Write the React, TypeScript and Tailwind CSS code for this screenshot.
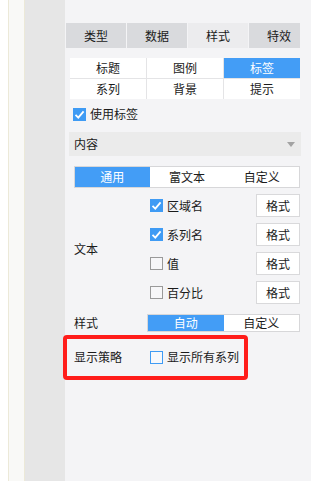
import type { ReactNode } from "react";

const FONT = { fontFamily: '"Noto Sans CJK SC", "Noto Sans", sans-serif' };

function CheckBox({ checked, accent }: { checked?: boolean; accent?: boolean }) {
  if (checked) {
    return (
      <span className="grid h-[13px] w-[13px] shrink-0 place-items-center bg-[#3f9bf4]">
        <svg viewBox="0 0 13 13" className="h-[13px] w-[13px]">
          <path d="M2.5 6.8 L5.3 9.6 L10.6 3.4" fill="none" stroke="#fff" strokeWidth="1.8" />
        </svg>
      </span>
    );
  }
  return (
    <span
      className={
        "h-[13px] w-[13px] shrink-0 border " +
        (accent ? "border-[#3f9bf4] bg-[#f7f8fb]" : "border-[#9a9a9a] bg-[#f7f7f9]")
      }
    />
  );
}

function Seg({ items, active, cls }: { items: string[]; active: number; cls: string }) {
  return (
    <div className={"flex border border-[#d7d7d9] bg-white " + cls}>
      {items.map((t, i) => (
        <div
          key={t}
          className={
            "flex flex-1 items-center justify-center text-[12px] " +
            (i === active ? "bg-[#439df6] text-white" : "text-[#1b1b1b]")
          }
        >
          {t}
        </div>
      ))}
    </div>
  );
}

function OptRow({ label, checked }: { label: string; checked?: boolean }) {
  return (
    <div className="flex h-[23px] w-[150px] items-center">
      <CheckBox checked={checked} />
      <span className="ml-[4px] flex-1 text-[12px] text-[#1b1b1b]">{label}</span>
      <button className="flex h-[23px] w-[44px] items-center justify-center border border-[#d9d9db] bg-white text-[12px] text-[#1b1b1b]">
        格式
      </button>
    </div>
  );
}

function Label({ children, w }: { children: ReactNode; w: string }) {
  return <div className={"shrink-0 text-[12px] text-[#1b1b1b] " + w}>{children}</div>;
}

export default function App() {
  const tabs = ["类型", "数据", "样式", "特效"];
  const subs = ["标题", "图例", "标签", "系列", "背景", "提示"];

  return (
    <div className="relative flex h-[481px] w-[311px] overflow-hidden" style={FONT}>
      <div className="w-[8px] bg-white" />
      <div className="w-[1px] bg-[#ece9d8]" />
      <div className="w-[15px] bg-[#f9f9f7]" />
      <div className="w-[1px] bg-[#ece9d8]" />
      <div className="w-[40px] bg-[#e6e6e6]" />

      <div className="flex flex-1 flex-col bg-[#f4f4f6] pt-[23px]">
        {/* top tabs */}
        <div className="ml-[1px] flex w-[234px] gap-[1px] overflow-hidden">
          {tabs.map((t, i) => (
            <div
              key={t}
              className={
                "flex h-[25px] w-[60px] shrink-0 items-center justify-center text-[12px] text-[#1b1b1b] " +
                (i === 2 ? "bg-[#ececee]" : "bg-[#d9dadd]")
              }
            >
              {t}
            </div>
          ))}
        </div>

        {/* sub tabs */}
        <div className="ml-[5px] mt-[10px] grid w-[230px] grid-cols-3 gap-[1px] bg-[#e4e4e6]">
          {subs.map((t, i) => (
            <div
              key={t}
              className={
                "flex h-[20px] items-center justify-center text-[12px] " +
                (i === 2 ? "bg-[#439df6] text-white" : "bg-white text-[#1b1b1b]")
              }
            >
              {t}
            </div>
          ))}
        </div>

        <div className="ml-[8px] mt-[5px] flex h-[20px] items-center">
          <CheckBox checked />
          <span className="ml-[4px] text-[12px] text-[#1b1b1b]">使用标签</span>
        </div>

        {/* dropdown */}
        <div className="ml-[4px] mt-[8px] flex h-[24px] w-[232px] items-center justify-between bg-[#ebebeb] pl-[5px] pr-[6px]">
          <span className="text-[12px] text-[#1b1b1b]">内容</span>
          <svg viewBox="0 0 8 5" className="h-[5px] w-[8px]">
            <path d="M0 0 H8 L4 5 Z" fill="#a3a3a3" />
          </svg>
        </div>

        <Seg items={["通用", "富文本", "自定义"]} active={0} cls="ml-[9px] mt-[10px] h-[22px] w-[226px]" />

        {/* text rows */}
        <div className="ml-[9px] mt-[6px] flex items-center">
          <Label w="w-[76px]">文本</Label>
          <div className="flex flex-col gap-[6px]">
            <OptRow label="区域名" checked />
            <OptRow label="系列名" checked />
            <OptRow label="值" />
            <OptRow label="百分比" />
          </div>
        </div>

        <div className="ml-[9px] mt-[10px] flex items-center">
          <Label w="w-[73px]">样式</Label>
          <Seg items={["自动", "自定义"]} active={0} cls="h-[18px] w-[153px]" />
        </div>

        <div className="ml-[9px] mt-[15px] flex h-[20px] items-center">
          <Label w="w-[76px]">显示策略</Label>
          <CheckBox accent />
          <span className="ml-[4px] text-[12px] text-[#1b1b1b]">显示所有系列</span>
        </div>
      </div>

      {/* red annotation */}
      <div className="pointer-events-none absolute left-[63px] top-[335px] h-[45px] w-[185px] rounded-[4px] border-[4px] border-[#ff1d1a]" />
    </div>
  );
}
